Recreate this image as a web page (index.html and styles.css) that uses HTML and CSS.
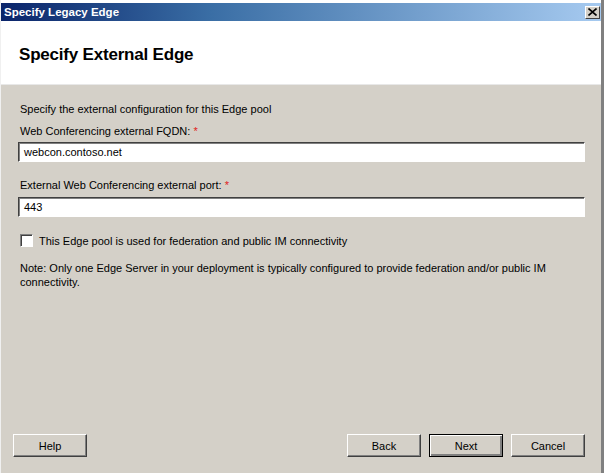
FILE: index.html
```html
<!DOCTYPE html>
<html>
<head>
<meta charset="utf-8">
<link rel="stylesheet" href="styles.css">
</head>
<body>
<div class="window">
  <div class="titlebar">
    <span class="title">Specify Legacy Edge</span>
    <span class="close"><svg width="9" height="8" viewBox="0 0 9 8"><path d="M0.5 0.5L8.5 7.5M8.5 0.5L0.5 7.5" stroke="#000" stroke-width="1.6"/></svg></span>
  </div>
  <div class="header">
    <h1 class="heading">Specify External Edge</h1>
  </div>
  <div class="body">
    <p class="intro">Specify the external configuration for this Edge pool</p>
    <label class="label">Web Conferencing external FQDN: <span class="req">*</span></label>
    <div class="input">webcon.contoso.net</div>
    <label class="label second">External Web Conferencing external port: <span class="req">*</span></label>
    <div class="input">443</div>
    <div class="check-row">
      <span class="checkbox"></span>
      <span class="check-label">This Edge pool is used for federation and public IM connectivity</span>
    </div>
    <p class="note">Note: Only one Edge Server in your deployment is typically configured to provide federation and/or public IM connectivity.</p>
    <div class="spacer"></div>
    <div class="buttons">
      <span class="btn">Help</span>
      <span class="grow"></span>
      <span class="btn">Back</span>
      <span class="btn default">Next</span>
      <span class="btn">Cancel</span>
    </div>
  </div>
</div>
</body>
</html>
```
FILE: styles.css
```css
html, body {
  margin: 0;
  padding: 0;
  background: #ffffff;
}
body {
  width: 604px;
  height: 473px;
  overflow: hidden;
  font-family: "Liberation Sans", Arial, sans-serif;
  font-size: 11px;
  color: #000;
}
.window {
  box-sizing: border-box;
  width: 604px;
  height: 473px;
  padding-top: 3px;
  display: flex;
  flex-direction: column;
  border-right: 3px solid #808080;
  border-left: 1px solid #f0f0f0;
}
.titlebar {
  height: 18px;
  background: linear-gradient(to right, #0a246a 0%, #3a6ea5 35%, #a6caf0 100%);
  display: flex;
  align-items: center;
  padding-left: 3px;
  padding-right: 1px;
}
.title {
  flex: 1;
  color: #fff;
  font-weight: bold;
  font-size: 11.5px;
}
.close {
  width: 15px;
  height: 13px;
  box-sizing: border-box;
  background: #d4d0c8;
  border: 1px solid;
  border-color: #ffffff #404040 #404040 #ffffff;
  display: flex;
  align-items: center;
  justify-content: center;
}
.header {
  height: 64px;
  box-sizing: border-box;
  background: #fff;
  display: flex;
  align-items: center;
  padding-left: 18px;
  padding-top: 4px;
  border-bottom: 1px solid #e8e8e8;
}
.heading {
  margin: 0;
  font-size: 17px;
  font-weight: bold;
  letter-spacing: -0.2px;
}
.body {
  flex: 1;
  background: #d4d0c8;
  display: flex;
  flex-direction: column;
  padding: 18px 16px 16px 17px;
}
.intro {
  margin: 0 0 10px 2px;
}
.label {
  display: block;
  margin: 0 0 5px 2px;
}
.label.second {
  margin-top: 17px;
  margin-bottom: 6px;
}
.req {
  color: #e02020;
}
.input {
  box-sizing: border-box;
  height: 20px;
  background: #fff;
  border: 1px solid;
  border-color: #404040 #ffffff #ffffff #404040;
  box-shadow: inset 1px 1px 0 #808080;
  padding: 3px 0 0 5px;
}
.check-row {
  display: flex;
  align-items: center;
  margin: 17px 0 0 2px;
}
.checkbox {
  box-sizing: border-box;
  width: 13px;
  height: 13px;
  background: #fff;
  border: 1px solid;
  border-color: #808080 #ffffff #ffffff #808080;
  box-shadow: inset 1px 1px 0 #404040;
  margin-right: 6px;
}
.note {
  margin: 14px 0 0 2px;
  line-height: 14px;
}
.spacer {
  flex: 1;
}
.buttons {
  display: flex;
  gap: 8px;
  margin-left: -5px;
}
.grow {
  flex: 1;
}
.btn {
  box-sizing: border-box;
  width: 74px;
  height: 23px;
  display: flex;
  align-items: center;
  justify-content: center;
  border: 1px solid;
  border-color: #ffffff #404040 #404040 #ffffff;
  box-shadow: inset -1px -1px 0 #808080;
  background: #d4d0c8;
}
.btn.default {
  border: 1px solid #000;
  box-shadow: inset 1px 1px 0 #fff, inset -2px -2px 0 #808080;
}
```
